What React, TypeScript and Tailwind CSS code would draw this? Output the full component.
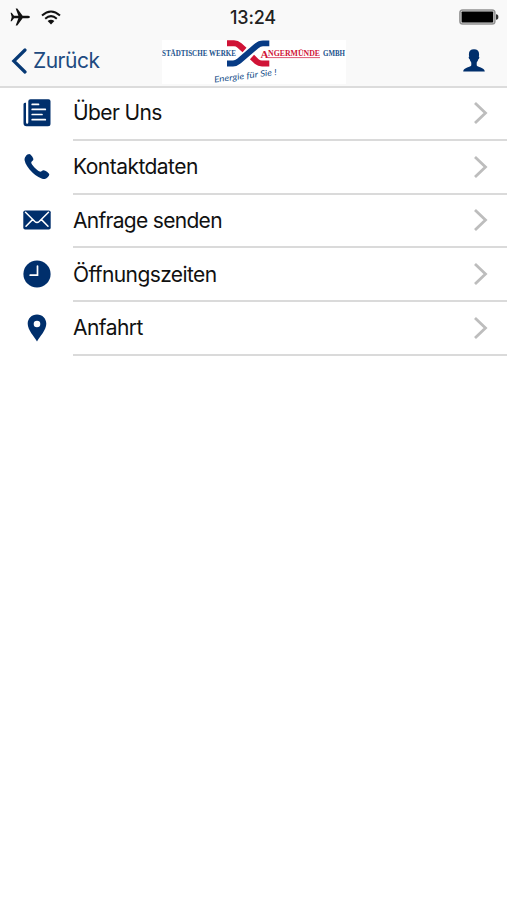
import type { ReactNode } from 'react';

interface MenuItem {
  label: string;
  tracking: string;
  icon: ReactNode;
}

const NewsIcon = () => (
  <svg width="28" height="28" viewBox="0 0 28 28" fill="#002f6c">
    <path d="M7.500 0.300H25.500Q27.500 0.300 27.500 2.300V24.800Q27.500 27.300 25 27.300H3.500Q0.500 27.300 0.500 24.300V5.300Q0.500 3.800 2 3.800H3V23.300Q3 24.800 4.200 24.800Q5.300 24.800 5.300 23.300V2.300Q5.300 0.300 7.500 0.300Z" />
    <path
      d="M9.200 5.400H15.500M9.200 10.400H22.300M9.200 15.500H19M9.200 20.700H22.300"
      stroke="#fff"
      strokeWidth="1.700"
      strokeLinecap="round"
    />
  </svg>
);

const PhoneIcon = () => (
  <svg width="28" height="28" viewBox="0 0 28 28" fill="#002f6c">
    <path d="M2.600 3.400C3.700 1.900 5.100 1.100 6.300 1.100C7.500 1.200 10.300 4.600 10.400 6.300C10.400 7.900 8.200 8.500 8.200 9.700C8.300 11.500 14 17.400 16.700 18.600C18.400 19.300 18.900 17.100 20.700 17.200C22.300 17.300 26.100 19.900 26.300 21.300C26.300 23.100 24.100 25.400 21.900 25.900C18.700 26.300 13.100 22.900 9.400 19.400C5.400 15.600 2.200 10.900 1.600 7.200C1.400 5.700 1.800 4.400 2.600 3.400Z" />
  </svg>
);

const MailIcon = () => (
  <svg width="28" height="20" viewBox="0 0 28 20">
    <rect x="0.300" y="0.500" width="27.400" height="19" rx="1.800" fill="#002f6c" />
    <path
      d="M2.500 2.200L11.800 11.500Q14 13.500 16.200 11.500L25.500 2.200M3 16.200L9.500 9.600M25 16.200L18.500 9.600"
      stroke="#fff"
      strokeWidth="1.500"
      strokeLinecap="round"
      fill="none"
    />
  </svg>
);

const ClockIcon = () => (
  <svg width="28" height="28" viewBox="0 0 28 28">
    <circle cx="14" cy="14" r="13.600" fill="#002f6c" />
    <path d="M14.500 6V15.200H7.200" stroke="#fff" strokeWidth="1.700" strokeLinecap="round" fill="none" />
  </svg>
);

const PinIcon = () => (
  <svg width="20" height="28" viewBox="0 0 20 28">
    <path
      d="M10 0.500C4.500 0.500 0.700 4.700 0.700 9.700C0.700 16 7.200 22.500 10 27.400C12.800 22.500 19.300 16 19.300 9.700C19.300 4.700 15.500 0.500 10 0.500ZM10 6.700A3.300 3.300 0 1 1 10 13.300A3.300 3.300 0 1 1 10 6.700Z"
      fill="#002f6c"
      fillRule="evenodd"
    />
  </svg>
);

const items: MenuItem[] = [
  { label: 'Über Uns', tracking: 'tracking-[-0.6px]', icon: <NewsIcon /> },
  { label: 'Kontaktdaten', tracking: 'tracking-[-0.53px]', icon: <PhoneIcon /> },
  { label: 'Anfrage senden', tracking: 'tracking-[-0.7px]', icon: <MailIcon /> },
  { label: 'Öffnungszeiten', tracking: 'tracking-[-0.6px]', icon: <ClockIcon /> },
  { label: 'Anfahrt', tracking: 'tracking-[-0.55px]', icon: <PinIcon /> }
];

const Logo = () => (
  <svg width="184" height="44" viewBox="162 40 184 44" className="bg-white">
    <path d="M227 43.300H234Q237 43.300 239.500 45.500L244.500 50" stroke="#d01336" strokeWidth="6" fill="none" />
    <path d="M252 57L257 61.800Q259 63.500 262 63.500H269.300" stroke="#d01336" strokeWidth="6" fill="none" />
    <path
      d="M227 63.500H233Q236 63.500 239 61L256.500 46Q259.500 43.300 263 43.300H269.300"
      stroke="#073b85"
      strokeWidth="5.800"
      fill="none"
    />
    <g fontFamily="'Liberation Serif', serif" fontWeight="700" fontSize="7.500">
      <text x="162" y="56" textLength="74" lengthAdjust="spacingAndGlyphs" fill="#21528c">
        STÄDTISCHE WERKE
      </text>
      <text x="260.500" y="58" fontSize="11" fill="#d01336">
        A
      </text>
      <text x="268" y="56" textLength="52" lengthAdjust="spacingAndGlyphs" fill="#d01336">
        NGERMÜNDE
      </text>
      <text x="323" y="56" textLength="22" lengthAdjust="spacingAndGlyphs" fill="#21528c">
        GMBH
      </text>
    </g>
    <path d="M268 57.600H320" stroke="#d01336" strokeWidth="0.700" />
    <text
      x="214.500"
      y="82.500"
      transform="rotate(-7 214.500 82.500)"
      textLength="63"
      lengthAdjust="spacingAndGlyphs"
      fontFamily="Lato, 'Liberation Sans', sans-serif"
      fontStyle="italic"
      fontSize="8.500"
      fill="#21528c"
    >
      Energie für Sie !
    </text>
  </svg>
);

const StatusBar = () => (
  <div className="flex h-[34px] items-center justify-between pl-[10px] pr-[8px]">
    <div className="flex w-[60px] items-center gap-[11px]">
      <svg width="20" height="18" viewBox="0 0 20 18" fill="#111">
        <path d="M20 9C20 8 18.500 7.700 17 7.700H12.600L7.300 0.400H5.700L8.400 7.700H4L1.700 4.800H0.600L1.700 9L0.600 13.200H1.700L4 10.300H8.400L5.700 17.600H7.300L12.600 10.300H17C18.500 10.300 20 10 20 9Z" />
      </svg>
      <svg width="20" height="15" viewBox="0 0 20 15" fill="none" stroke="#111" strokeWidth="2">
        <path d="M1 5.500Q10 -2.500 19 5.500M4.200 8.700Q10 3.600 15.800 8.700" />
        <path d="M6.600 11Q10 8.300 13.400 11L10 14.500Z" fill="#111" stroke="none" />
      </svg>
    </div>
    <span className="mr-[3px] pt-[2px] text-[18px] font-medium leading-none tracking-[-0.2px] text-[#222]">
      13:24
    </span>
    <div className="flex w-[60px] justify-end">
      <svg width="40" height="16" viewBox="0 0 40 16">
        <rect x="0.900" y="0.900" width="35" height="14.200" rx="2.800" fill="#ddd" stroke="#929292" strokeWidth="1.500" />
        <rect x="2.600" y="2.500" width="31.600" height="11" rx="0.800" fill="#000" />
        <path d="M37 5.300Q39.400 5.300 39.400 8T37 10.700Z" fill="#333" />
      </svg>
    </div>
  </div>
);

const NavBar = () => (
  <div className="grid h-[52px] grid-cols-[162px_184px_1fr]">
    <div className="flex h-[53px] items-center pl-[11px] text-[21px] text-[#204a80]">
      <svg width="17" height="26" viewBox="0 0 17 26" fill="none" stroke="#073975" strokeWidth="3.200">
        <path d="M14 2L2.800 13L14 24" strokeLinecap="round" />
      </svg>
      <span className="ml-[5px] pt-px tracking-[-0.5px]">Zurück</span>
    </div>
    <div className="pt-[6px]">
      <Logo />
    </div>
    <div className="flex justify-end pr-[22px] pt-[15px]">
      <svg width="22" height="23" viewBox="0 0 22 23" fill="#002f6c">
        <path d="M11 0.300C7.700 0.300 5.900 2.200 5.900 5.200C5.900 6.300 6 7 6.200 7.500C5.200 7.600 5.700 9.800 6.700 10.300C7.100 12 8 13 8.300 13.800V16.300C7.900 18.200 0.500 18.200 0.200 22.600H21.800C21.500 18.200 14.100 18.200 13.700 16.300V13.800C14 13 14.900 12 15.300 10.300C16.300 9.800 16.800 7.600 15.800 7.500C16 7 16.100 6.300 16.100 5.200C16.100 2.200 14.300 0.300 11 0.300Z" />
      </svg>
    </div>
  </div>
);

const MenuRow = ({ label, tracking, icon }: MenuItem) => (
  <li className="flex h-[53.75px]">
    <div className="flex w-[73px] shrink-0 items-center justify-center pb-[2px]">{icon}</div>
    <div className="flex flex-1 items-center justify-between border-b-2 border-[#dadada] pr-[19px]">
      <span className={`text-[21px] leading-none text-[#111] ${tracking}`}>{label}</span>
      <svg width="15" height="24" viewBox="0 0 15 24" fill="none" stroke="#bdbdbd" strokeWidth="2.800">
        <path d="M2 2L12.500 12L2 22" />
      </svg>
    </div>
  </li>
);

const App = () => (
  <div className="min-h-[900px] w-[507px] bg-white font-['Inter','Liberation_Sans',sans-serif]">
    <header className="h-[88px] border-b-2 border-[#dcdcdc] bg-[#f9f9f9]">
      <StatusBar />
      <NavBar />
    </header>
    <ul className="-mt-px">
      {items.map((item) => (
        <MenuRow key={item.label} {...item} />
      ))}
    </ul>
  </div>
);

export default App;
